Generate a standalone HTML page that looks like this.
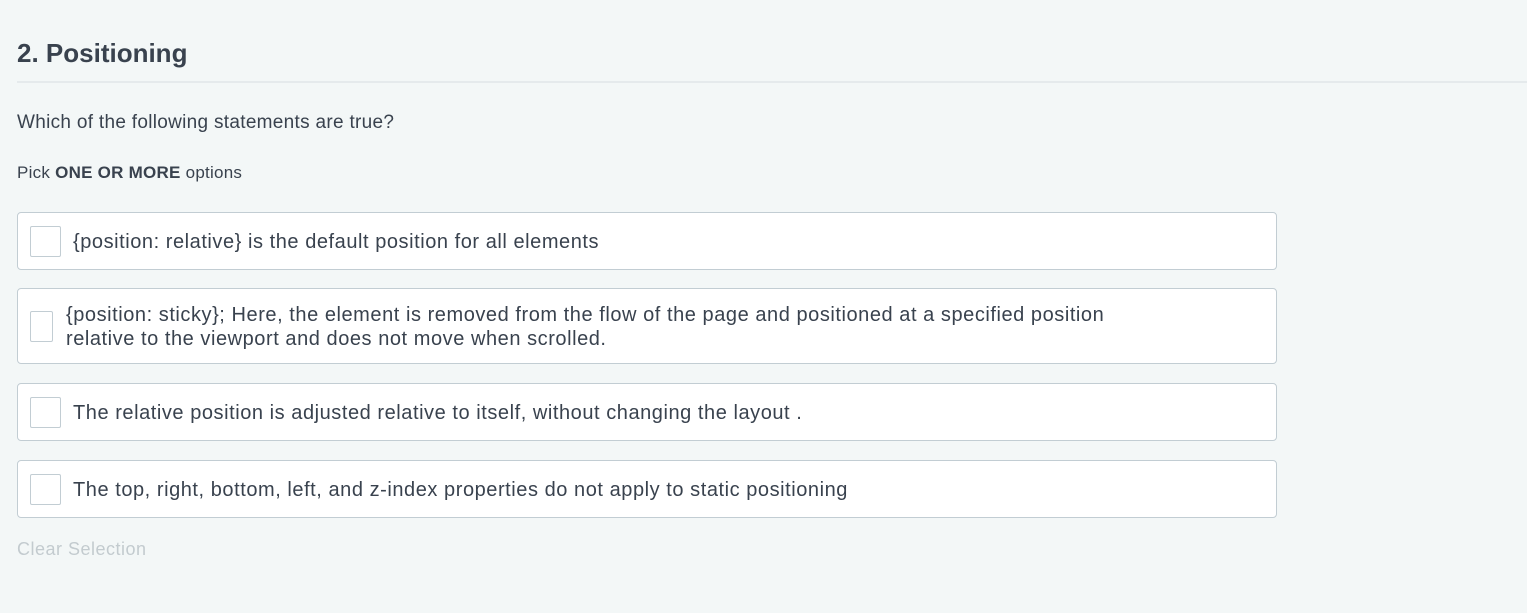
<!DOCTYPE html>
<html><head><style>
body{margin:0;background:#f3f7f7;font-family:"Liberation Sans",sans-serif;color:#39424e;width:1527px;height:613px;overflow:hidden;position:relative}
.a{position:absolute}
h1{position:absolute;left:17px;top:35px;margin:0;font-size:26px;font-weight:bold;line-height:36px}
.hr{left:17px;right:0;top:81px;height:2px;background:#e5eaec}
.box{left:17px;width:1258px;background:#fff;border:1px solid #c2cdd3;border-radius:4px}
.cb{position:absolute;left:12px;width:29px;height:29px;border:1px solid #c2cdd3;border-radius:2px;background:#fff}
.t{position:absolute;left:55px;font-size:20px;letter-spacing:0.55px;line-height:24px;color:#39424e;white-space:nowrap}
</style></head><body>
<h1>2. Positioning</h1>
<div class="a hr"></div>
<div class="a" style="left:17px;top:112px;font-size:19px;letter-spacing:0.3px">Which of the following statements are true?</div>
<div class="a" style="left:17px;top:163px;font-size:17px;letter-spacing:0.25px">Pick <b>ONE OR MORE</b> options</div>

<div class="a box" style="top:212px;height:56px"><div class="cb" style="top:13px"></div><div class="t" style="top:17px">{position: relative} is the default position for all elements</div></div>
<div class="a box" style="top:288px;height:74px"><div class="cb" style="top:22px;width:21px"></div><div class="t" style="left:48px;top:14px">{position: sticky}; Here, the element is removed from the flow of the page and positioned at a specified position<br>relative to the viewport and does not move when scrolled.</div></div>
<div class="a box" style="top:383px;height:56px"><div class="cb" style="top:13px"></div><div class="t" style="top:17px">The relative position is adjusted relative to itself, without changing the layout .</div></div>
<div class="a box" style="top:460px;height:56px"><div class="cb" style="top:13px"></div><div class="t" style="top:17px">The top, right, bottom, left, and z-index properties do not apply to static positioning</div></div>

<div class="a" style="left:17px;top:539px;font-size:18px;letter-spacing:0.5px;color:#c3cbcf">Clear Selection</div>
</body></html>
